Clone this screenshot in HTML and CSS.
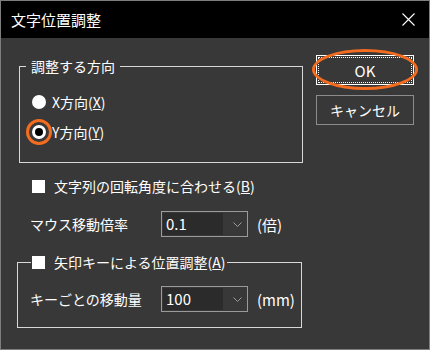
FILE: index.html
```html
<!DOCTYPE html>
<html lang="ja">
<head>
    <meta charset="UTF-8">
    <title>文字位置調整</title>
    <link rel="stylesheet" href="styles.css">
</head>
<body>
    <div class="window">
        <!-- Title bar -->
        <div class="titlebar">
            <span class="title">文字位置調整</span>
            <svg class="close" width="13" height="13" viewBox="0 0 13 13">
                <path d="M0.5 0.5 L12.5 12.5 M12.5 0.5 L0.5 12.5" stroke="#fff" stroke-width="1.1" fill="none"/>
            </svg>
        </div>

        <div class="content">
            <div class="left">
                <!-- Direction group -->
                <fieldset class="group group-dir">
                    <legend class="legend">調整する方向</legend>
                    <div class="radio-row">
                        <span class="radio"></span>
                        <span>X方向(<u>X</u>)</span>
                    </div>
                    <div class="radio-row">
                        <span class="radio checked"><span class="mark-ring"></span></span>
                        <span>Y方向(<u>Y</u>)</span>
                    </div>
                </fieldset>

                <div class="check-row">
                    <span class="check"></span>
                    <span>文字列の回転角度に合わせる(<u>B</u>)</span>
                </div>

                <div class="field-row">
                    <span class="label">マウス移動倍率</span>
                    <div class="combo">
                        <span class="combo-text">0.1</span>
                        <svg class="chevron" width="9" height="5" viewBox="0 0 9 5">
                            <path d="M0.5 0.5 L4.5 4.5 L8.5 0.5" stroke="#9c9c9c" fill="none"/>
                        </svg>
                    </div>
                    <span class="unit">(倍)</span>
                </div>

                <!-- Arrow key group -->
                <fieldset class="group group-key">
                    <legend class="legend legend-check">
                        <span class="legend-inner"><span class="check"></span>矢印キーによる位置調整(<u>A</u>)</span>
                    </legend>
                    <div class="field-row">
                        <span class="label">キーごとの移動量</span>
                        <div class="combo">
                            <span class="combo-text">100</span>
                            <svg class="chevron" width="9" height="5" viewBox="0 0 9 5">
                                <path d="M0.5 0.5 L4.5 4.5 L8.5 0.5" stroke="#9c9c9c" fill="none"/>
                            </svg>
                        </div>
                        <span class="unit">(mm)</span>
                    </div>
                </fieldset>
            </div>

            <div class="right">
                <button class="btn btn-ok">OK<span class="mark-ellipse"></span></button>
                <button class="btn">キャンセル</button>
            </div>
        </div>
    </div>
</body>
</html>
```

FILE: styles.css
```css
body {
    margin: 0;
    background-color: #383838;
    font-family: "Noto Sans CJK JP", sans-serif;
    font-size: 14px;
    color: #fff;
}
.window {
    width: 430px;
    height: 350px;
    box-sizing: border-box;
    border: 1px solid #7e7e7e;
    background-color: #383838;
}
.titlebar {
    height: 37px;
    background-color: #000;
    display: flex;
    align-items: center;
    padding: 0 14px 0 10px;
}
.title {
    font-size: 15px;
    flex: 1;
}
.close {
    display: block;
}
.content {
    display: flex;
}
.left {
    width: 284px;
    margin-left: 18px;
}
.group {
    margin: 0;
    padding: 0;
    min-width: 0;
    border: 1px solid #d8d8d8;
}
.legend {
    line-height: 20px;
    height: 20px;
    padding: 0 5px;
    margin-left: 6px;
}
.group-dir {
    margin-top: 18px;
    padding: 16px 0 20px 0;
}
.radio-row {
    display: flex;
    align-items: center;
    height: 20px;
    padding-left: 12px;
}
.radio-row + .radio-row {
    margin-top: 10px;
}
.radio {
    position: relative;
    width: 14px;
    height: 14px;
    box-sizing: border-box;
    border-radius: 50%;
    background-color: #fff;
    margin-right: 6px;
}
.radio.checked {
    background-color: #000;
    border: 3px solid #fff;
}
.mark-ring {
    position: absolute;
    left: -9px;
    top: -9px;
    width: 26px;
    height: 26px;
    box-sizing: border-box;
    border: 3px solid #f36c1f;
    border-radius: 50%;
}
.check {
    display: inline-block;
    width: 13px;
    height: 13px;
    background-color: #fff;
    margin-right: 9px;
}
.check-row {
    display: flex;
    align-items: center;
    height: 20px;
    margin-top: 13px;
    padding-left: 13px;
}
.field-row {
    display: flex;
    align-items: center;
    height: 26px;
    margin-top: 15px;
    padding-left: 11px;
}
.label {
    width: 131px;
}
.combo {
    width: 87px;
    height: 26px;
    box-sizing: border-box;
    border: 1px solid #9a9a9a;
    padding: 1px;
    display: flex;
    align-items: center;
}
.combo-text {
    width: 60px;
    height: 100%;
    background-color: #2b2b2b;
    padding-left: 3px;
    box-sizing: border-box;
    line-height: 22px;
    font-size: 15px;
}
.chevron {
    margin-left: auto;
    margin-right: 4px;
}
.unit {
    margin-left: 9px;
    font-size: 15px;
}
.group-key {
    margin-top: 15px;
    margin-left: -2px;
    width: 285px;
    box-sizing: border-box;
    padding: 14px 0 15px 0;
}
.legend-check {
    padding: 0 1px;
    margin-left: 13px;
}
.legend-inner {
    display: flex;
    align-items: center;
    height: 20px;
}
.group-key .field-row {
    margin-top: 0;
    padding-left: 12px;
}
.right {
    margin-left: 13px;
    padding-top: 17px;
    display: flex;
    flex-direction: column;
}
.btn {
    position: relative;
    width: 98px;
    height: 30px;
    background-color: #383838;
    border: 1px solid #8c8c8c;
    color: #fff;
    font-family: "Noto Sans CJK JP", sans-serif;
    font-size: 14px;
    padding: 0;
}
.btn + .btn {
    margin-top: 10px;
}
.btn-ok {
    border-color: #fff;
    outline: 1px dotted #fff;
    outline-offset: -3px;
    font-size: 15px;
}
.mark-ellipse {
    position: absolute;
    left: -5px;
    top: -7px;
    width: 106px;
    height: 41px;
    box-sizing: border-box;
    border: 3px solid #f36c1f;
    border-radius: 50%;
}
```
